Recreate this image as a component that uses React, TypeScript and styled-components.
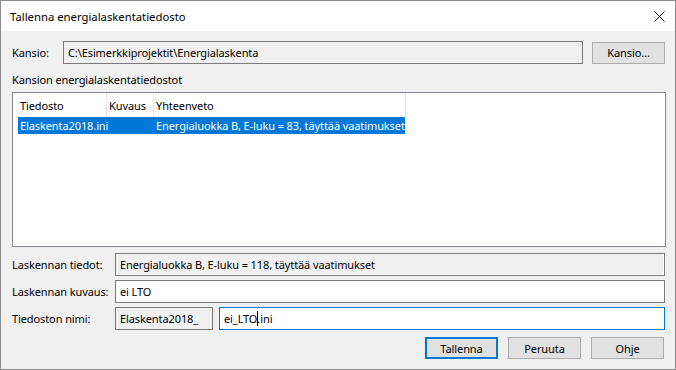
import React from "react";
import styled, { createGlobalStyle } from "styled-components";

const Global = createGlobalStyle`
  html, body { margin: 0; padding: 0; background: #f0f0f0; }
  body { font-family: "Noto Sans", "Open Sans", sans-serif; font-size: 11px; letter-spacing: -0.1px; color: #000; }
  * { box-sizing: border-box; }
`;

const Window = styled.div`
  width: 676px;
  height: 370px;
  border: 1px solid #8c8c8c;
  background: #f0f0f0;
  display: flex;
  flex-direction: column;
`;

const TitleBar = styled.div`
  height: 30px;
  background: #fff;
  display: flex;
  align-items: center;
  justify-content: space-between;
  padding: 0 10px 0 9px;
  font-size: 11.3px;
  letter-spacing: 0;
`;

const CloseIcon = styled.svg`
  width: 11px;
  height: 11px;
`;

const Client = styled.div`
  flex: 1;
  padding: 10px 10px 0 11px;
  display: flex;
  flex-direction: column;
`;

const Row = styled.div<{ $mt?: number }>`
  display: flex;
  align-items: center;
  margin-top: ${(p) => p.$mt ?? 0}px;
`;

const Label = styled.div<{ $w: number }>`
  width: ${(p) => p.$w}px;
  flex: none;
  white-space: nowrap;
`;

const Field = styled.div<{ $ro?: boolean; $focus?: boolean; $inset?: boolean; $w?: number }>`
  height: 23px;
  ${(p) => (p.$w ? `width: ${p.$w}px; flex: none;` : "flex: 1;")}
  border: 1px solid ${(p) => (p.$focus ? "#0078d7" : "#7a7a7a")};
  background: ${(p) => (p.$ro ? "#f0f0f0" : "#fff")};
  box-shadow: ${(p) => (p.$inset ? "inset -1px -1px 0 #fcfcfc" : "none")};
  display: flex;
  align-items: center;
  padding-left: 4px;
  white-space: nowrap;
  overflow: hidden;
`;

const Caret = styled.span`
  display: inline-block;
  width: 1px;
  height: 15px;
  background: #000;
  vertical-align: middle;
  margin: 0 -1px 0 0;
`;

const Spacer = styled.div<{ $w: number }>`
  width: ${(p) => p.$w}px;
  flex: none;
`;

const Button = styled.div<{ $def?: boolean }>`
  width: 73px;
  height: 22px;
  flex: none;
  background: #e1e1e1;
  border: ${(p) => (p.$def ? "2px solid #0078d7" : "1px solid #adadad")};
  display: flex;
  align-items: center;
  justify-content: center;
`;

const SectionLabel = styled.div`
  margin-top: 8px;
  height: 16px;
  line-height: 16px;
`;

const List = styled.div`
  margin-top: 4px;
  height: 155px;
  margin-right: -1px;
  border: 1px solid #828790;
  background: #fff;
  padding: 0 0 0 5px;
`;

const HeaderRow = styled.div`
  display: flex;
  height: 24px;
`;

const HeaderCell = styled.div<{ $w: number }>`
  width: ${(p) => p.$w}px;
  flex: none;
  border-right: 1px solid #e5e5e5;
  padding-left: 2px;
  display: flex;
  align-items: center;
  padding-top: 1px;
  white-space: nowrap;
`;

const DataRow = styled.div<{ $sel?: boolean }>`
  display: flex;
  height: 17px;
  width: 387px;
  background: ${(p) => (p.$sel ? "#0078d7" : "transparent")};
  color: ${(p) => (p.$sel ? "#fff" : "#000")};
`;

const DataCell = styled.div<{ $w: number }>`
  width: ${(p) => p.$w}px;
  flex: none;
  padding-left: 2px;
  display: flex;
  align-items: center;
  white-space: nowrap;
`;

const Buttons = styled.div`
  display: flex;
  justify-content: flex-end;
  gap: 10px;
  margin-top: 7px;
  padding-right: 1px;
`;

const cols = [88, 47, 252];

export default function App() {
  return (
    <>
      <Global />
      <Window>
        <TitleBar>
          <span>Tallenna energialaskentatiedosto</span>
          <CloseIcon viewBox="0 0 11 11">
            <path d="M0.5 0.5 L10.5 10.5 M10.5 0.5 L0.5 10.5" stroke="#111" strokeWidth="1" fill="none" />
          </CloseIcon>
        </TitleBar>
        <Client>
          <Row>
            <Label $w={51}>Kansio:</Label>
            <Field $ro>C:\Esimerkkiprojektit\Energialaskenta</Field>
            <Spacer $w={9} />
            <Button>Kansio...</Button>
          </Row>
          <SectionLabel>Kansion energialaskentatiedostot</SectionLabel>
          <List>
            <HeaderRow>
              <HeaderCell $w={cols[0] + 1}>Tiedosto</HeaderCell>
              <HeaderCell $w={cols[1]}>Kuvaus</HeaderCell>
              <HeaderCell $w={cols[2]}>Yhteenveto</HeaderCell>
            </HeaderRow>
            <DataRow $sel>
              <DataCell $w={cols[0] + 1}>Elaskenta2018.ini</DataCell>
              <DataCell $w={cols[1]}></DataCell>
              <DataCell $w={cols[2]}>Energialuokka B, E-luku = 83, täyttää vaatimukset</DataCell>
            </DataRow>
          </List>
          <Row $mt={6}>
            <Label $w={103}>Laskennan tiedot:</Label>
            <Field $ro $inset>Energialuokka B, E-luku = 118, täyttää vaatimukset</Field>
          </Row>
          <Row $mt={4}>
            <Label $w={103}>Laskennan kuvaus:</Label>
            <Field>ei LTO</Field>
          </Row>
          <Row $mt={4}>
            <Label $w={103}>Tiedoston nimi:</Label>
            <Field $ro $w={98}>Elaskenta2018_</Field>
            <Spacer $w={6} />
            <Field $focus>
              ei_LTO<Caret />.ini
            </Field>
          </Row>
          <Buttons>
            <Button $def>Tallenna</Button>
            <Button>Peruuta</Button>
            <Button>Ohje</Button>
          </Buttons>
        </Client>
      </Window>
    </>
  );
}
